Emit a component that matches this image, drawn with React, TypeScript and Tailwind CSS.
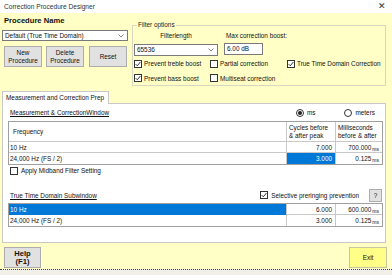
import React from 'react';

// Petits contrôles façon WinForms
function Check({ on = false }: { on?: boolean }) {
  return (
    <span className="w-[8px] h-[8px] border border-[#333] bg-white flex items-center justify-center shrink-0">
      {on && (
        <svg width="6" height="6" viewBox="0 0 6 6">
          <path d="M0.6 3.1 L2.3 4.8 L5.4 1" stroke="#222" strokeWidth="0.9" fill="none" />
        </svg>
      )}
    </span>
  );
}

function Radio({ on = false }: { on?: boolean }) {
  return (
    <span className="w-[8px] h-[8px] rounded-full border border-[#333] bg-white flex items-center justify-center shrink-0">
      {on && <span className="w-[4px] h-[4px] rounded-full bg-[#222]" />}
    </span>
  );
}

function Chevron() {
  return (
    <svg width="6" height="4" viewBox="0 0 6 4">
      <path d="M0.5 0.5 L3 3 L5.5 0.5" stroke="#666" strokeWidth="0.8" fill="none" />
    </svg>
  );
}

function Btn({ children, cls = '' }: { children: React.ReactNode; cls?: string }) {
  return (
    <div className={`h-[21px] bg-[#e1e1e1] border border-[#adadad] flex items-center justify-center text-center leading-[8px] text-[#111] ${cls}`}>
      {children}
    </div>
  );
}

function Num({ v, ms, sel = false }: { v: string; ms?: boolean; sel?: boolean }) {
  return (
    <div className={`flex items-end justify-end pr-[3px] border-l border-[#c8c8c8] ${sel ? 'bg-[#0078d7] text-white' : ''}`}>
      {v}
      {ms && <span className="text-[5px] ml-[1px] leading-[8px]">ms</span>}
    </div>
  );
}

export default function App() {
  return (
    <div className="w-[392px] h-[275px] overflow-hidden whitespace-nowrap bg-[#ffffc6] text-[6.4px] text-[#111] font-['Liberation_Sans',Arial,sans-serif] flex flex-col">
      {/* barre de titre */}
      <div className="h-[13px] bg-white flex items-center justify-between pl-[4px] pr-[6px] shrink-0">
        <span className="text-[#333] text-[6.6px]">Correction Procedure Designer</span>
        <span className="text-[9px] text-[#333]">✕</span>
      </div>

      {/* haut : nom de procédure + options de filtre */}
      <div className="h-[78px] flex shrink-0">
        <div className="w-[130px] pl-[2px] flex flex-col">
          <div className="mt-[3px] ml-[2px] text-[7.6px] font-bold leading-[9px]">Procedure Name</div>
          <div className="mt-[5px] w-[126px] h-[11px] bg-white border border-[#7a7a7a] flex items-center justify-between pl-[2px] pr-[3px]">
            <span>Default (True Time Domain)</span>
            <Chevron />
          </div>
          <div className="mt-[5px] flex pl-[2px]">
            <Btn cls="w-[38px]">New<br />Procedure</Btn>
            <Btn cls="w-[38px] ml-[4px]">Delete<br />Procedure</Btn>
            <Btn cls="w-[38px] ml-[5px]">Reset</Btn>
          </div>
        </div>

        <fieldset className="ml-[2px] mt-[8px] w-[254px] h-[65px] border border-[#d8d8c0] px-[1px] pb-0">
          <legend className="ml-[3px] px-[1px] text-[#222] leading-[8px]">Filter options</legend>
          <div className="flex mt-[3px]">
            <div className="w-[84px] flex flex-col">
              <div className="text-center leading-[8px]">Filterlength</div>
              <div className="mt-[4px] h-[12px] bg-white border border-[#7a7a7a] flex items-center justify-between pl-[2px] pr-[3px]">
                <span>65536</span>
                <Chevron />
              </div>
            </div>
            <div className="ml-[6px] flex flex-col">
              <div className="leading-[8px] ml-[2px]">Max correction boost:</div>
              <div className="mt-[3px] w-[39px] h-[12px] bg-white border border-[#7a7a7a] flex items-center pl-[2px]">
                6.00 dB
              </div>
            </div>
          </div>
          <div className="mt-[3px] grid grid-cols-[76px_77px_1fr] gap-y-[5px]">
            <div className="flex items-center gap-[2px]"><Check on />Prevent treble boost</div>
            <div className="flex items-center gap-[2px]"><Check />Partial correction</div>
            <div className="flex items-center gap-[2px]"><Check on />True Time Domain Correction</div>
            <div className="flex items-center gap-[2px]"><Check on />Prevent bass boost</div>
            <div className="flex items-center gap-[2px]"><Check />Multiseat correction</div>
          </div>
        </fieldset>
      </div>

      {/* onglet */}
      <div className="h-[12px] flex shrink-0 pl-[2px]">
        <div className="w-[107px] h-[13px] bg-white border border-b-0 border-[#c8c8c8] flex items-center pl-[3px] relative z-10">
          Measurement and Correction Prep
        </div>
      </div>
      <div className="ml-[2px] w-[384px] h-[140px] bg-white border border-[#c8c8c8] flex flex-col shrink-0">
        <div className="mt-[4px] h-[9px] flex items-center">
          <span className="ml-[7px] underline">Measurement &amp; CorrectionWindow</span>
          <span className="ml-auto flex items-center gap-[3px]"><Radio on />ms</span>
          <span className="ml-[29px] mr-[10px] flex items-center gap-[3px]"><Radio />meters</span>
        </div>

        <div className="mt-[4px] ml-[5px] w-[375px] border border-[#a0a0a0]">
          <div className="h-[20px] grid grid-cols-[277px_49px_1fr] border-b border-[#c8c8c8]">
            <div className="flex items-center pl-[4px]">Frequency</div>
            <div className="border-l border-[#c8c8c8] pl-[2px] pt-[2px] leading-[7.5px]">Cycles before<br />&amp; after peak</div>
            <div className="border-l border-[#c8c8c8] pl-[2px] pt-[2px] leading-[7.5px]">Milliseconds<br />before &amp; after</div>
          </div>
          <div className="h-[11px] grid grid-cols-[277px_49px_1fr] border-b border-[#c8c8c8] leading-[10px]">
            <div className="pl-[1px] pt-[1px]">10 Hz</div>
            <Num v="7.000" />
            <Num v="700.000" ms />
          </div>
          <div className="h-[11px] grid grid-cols-[277px_49px_1fr] leading-[10px]">
            <div className="pl-[1px] pt-[1px]">24,000 Hz (FS / 2)</div>
            <Num v="3.000" sel />
            <Num v="0.125" ms />
          </div>
        </div>

        <div className="mt-[1px] ml-[7px] h-[9px] flex items-center gap-[3px]">
          <Check />Apply Midband Filter Setting
        </div>

        <div className="mt-[14px] h-[13px] flex items-center">
          <span className="ml-[7px] underline">True Time Domain Subwindow</span>
          <span className="ml-auto flex items-center gap-[3px]"><Check on />Selective preringing prevention</span>
          <span className="ml-[10px] mr-[3px] w-[13px] h-[13px] bg-[#e1e1e1] border border-[#adadad] flex items-center justify-center">?</span>
        </div>

        <div className="mt-[1px] ml-[5px] w-[375px] border border-[#a0a0a0]">
          <div className="h-[11px] grid grid-cols-[277px_49px_1fr] border-b border-[#c8c8c8] leading-[10px]">
            <div className="pl-[1px] pt-[1px] bg-[#0078d7] text-white">10 Hz</div>
            <Num v="6.000" />
            <Num v="600.000" ms />
          </div>
          <div className="h-[11px] grid grid-cols-[277px_49px_1fr] leading-[10px]">
            <div className="pl-[1px] pt-[1px]">24,000 Hz (FS / 2)</div>
            <Num v="3.000" />
            <Num v="0.125" ms />
          </div>
        </div>
      </div>

      {/* boutons du bas */}
      <div className="mt-[4px] h-[21px] flex shrink-0">
        <Btn cls="ml-[4px] w-[37px] font-bold text-[7.6px] leading-[8.5px]">Help<br />(F1)</Btn>
        <div className="ml-auto mr-[5px] w-[38px] h-[21px] bg-[#ffff88] border border-[#c8c8a0] flex items-center justify-center">Exit</div>
      </div>

      <div className="mt-[1px] flex-1 border-t border-dotted border-[#444] bg-[#f0f0e8]" />
    </div>
  );
}
